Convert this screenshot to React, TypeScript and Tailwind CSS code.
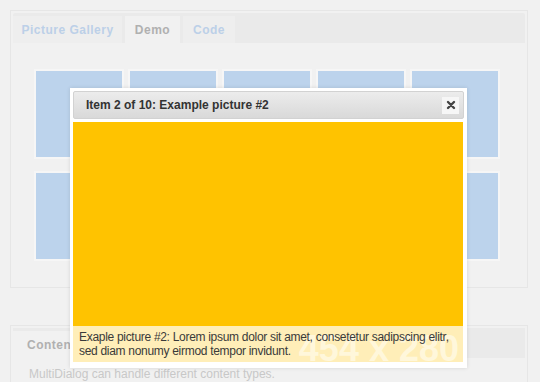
import React from 'react';

const thumbs = Array.from({ length: 10 }, (_, i) => i);

export default function App() {
  return (
    <div
      className="relative w-[540px] h-[382px] overflow-hidden bg-[#f1f1f1]"
      style={{ fontFamily: '"Liberation Sans", Arial, sans-serif' }}
    >
      {/* Demo panel */}
      <div className="absolute left-[10px] top-[10px] w-[518px] h-[278px] border border-[#e6e6e6] p-[2px]">
        <div className="flex items-end gap-[3px] h-[30px] bg-[#eaeaea] rounded-t-[2px]">
          <div className="h-[27px] w-[109px] flex items-center justify-center bg-[#eeeeee] text-[12px] font-bold tracking-[0.5px] text-[#bcd0e8]">
            Picture Gallery
          </div>
          <div className="h-[27px] w-[55px] flex items-center justify-center bg-[#f1f1f1] text-[12px] font-bold tracking-[0.5px] text-[#b0b0b0]">
            Demo
          </div>
          <div className="h-[27px] w-[52px] flex items-center justify-center bg-[#eeeeee] text-[12px] font-bold tracking-[0.5px] text-[#bcd0e8]">
            Code
          </div>
        </div>
        <div className="grid grid-cols-[repeat(5,86px)] gap-x-[8px] gap-y-[16px] ml-[23px] mt-[28px]">
          {thumbs.map((t) => (
            <div key={t} className="h-[86px] bg-[#bcd3ec] outline outline-[2px] outline-[#f6f6f6]" />
          ))}
        </div>
      </div>

      {/* Content panel */}
      <div className="absolute left-[10px] top-[325px] w-[518px] h-[80px] border border-[#e6e6e6] p-[2px]">
        <div className="flex items-end h-[30px] bg-[#eaeaea]">
          <div className="h-[27px] px-[14px] flex items-center bg-[#f1f1f1] text-[12px] font-bold tracking-[0.5px] text-[#b0b0b0]">
            Content types
          </div>
        </div>
        <p className="mt-[9px] ml-[16px] text-[12px] leading-[14px] text-[#c8c8c8]">
          MultiDialog can handle different content types.
        </p>
      </div>

      {/* Dialog */}
      <div className="absolute left-[70px] top-[88px] w-[397px] h-[280px] bg-white p-[3px] shadow-[0_0_4px_rgba(0,0,0,0.12)]">
        <div className="flex items-center justify-between h-[28px] px-[12px] pr-[4px] bg-gradient-to-b from-[#ececec] to-[#d9d9d9] border border-[#d2d2d2] rounded-[2px]">
          <span className="text-[12px] font-bold text-[#333333]">Item 2 of 10: Example picture #2</span>
          <button className="w-[17px] h-[17px] bg-[#f6f6f6] flex items-center justify-center">
            <svg width="10" height="10" viewBox="0 0 10 10">
              <path d="M2 2L8 8M8 2L2 8" stroke="#444" strokeWidth="2.4" strokeLinecap="round" />
            </svg>
          </button>
        </div>
        <div className="relative mt-[3px] w-[390px] h-[240px] bg-[#ffc300] overflow-hidden">
          <span className="absolute right-[4px] bottom-[-5px] text-[36px] font-bold leading-none text-white/50">
            454 x 280
          </span>
          <div className="absolute left-0 right-0 bottom-0 h-[36px] bg-[rgba(255,255,255,0.72)] px-[6px] pt-[4px] text-[12px] leading-[14px] tracking-[-0.3px] whitespace-nowrap text-[#3a3a3a]">
            Exaple picture #2: Lorem ipsum dolor sit amet, consetetur sadipscing elitr,
            <br />
            sed diam nonumy eirmod tempor invidunt.
          </div>
        </div>
      </div>
    </div>
  );
}
